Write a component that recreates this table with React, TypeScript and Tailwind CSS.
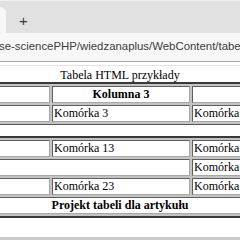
import React from 'react';

const serif = { fontFamily: '"Liberation Serif", "Times New Roman", serif' };

const cell = 'border border-t-[#5f5f5f] border-l-[#5f5f5f] border-r-[#a8a8a8] border-b-[#a8a8a8] bg-white px-[1px] h-[17px] p-0 leading-[15px] whitespace-nowrap overflow-hidden';

const Cols = () => (
  <colgroup>
    <col className="w-[170px]" />
    <col className="w-[138px]" />
    <col className="w-[168px]" />
  </colgroup>
);

export default function App() {
  return (
    <div className="w-[240px] h-[240px] overflow-hidden bg-white relative flex flex-col">
      {/* pasek kart */}
      <div className="h-[33px] bg-[#e1e1e1] border-t border-[#f0f0f0] flex items-end relative">
        <div className="w-[6px] h-[26px] bg-[#f7f7f7] rounded-tr-[6px]" />
        <span className="absolute left-[19px] top-[12px] text-[15px] leading-[16px] text-[#3a3a3a]" style={{ fontFamily: '"Liberation Sans", Arial, sans-serif' }}>+</span>
      </div>
      {/* pasek adresu */}
      <div className="h-[28px] bg-[#f7f7f7] flex items-center overflow-hidden">
        <span className="ml-[-1px] whitespace-nowrap text-[11.4px] text-[#3c3c3c]" style={{ fontFamily: '"Liberation Sans", Arial, sans-serif' }}>
          se-sciencePHP/wiedzanaplus/WebContent/tabela.php
        </span>
      </div>
      <div className="h-px bg-[#a9a9a9]" />
      <div className="h-[3px] bg-white" />
      <div className="h-px bg-[#e4e4e4]" />

      <div className="flex-1 pt-[2px] text-[12px] text-black" style={serif}>
        <table className="table-fixed border-separate border-spacing-[2px] w-[486px] ml-[-123px] border border-[#555] border-t-2 border-t-[#3a3a3a] bg-[#c4c4c4]">
          <caption className="bg-white leading-[14px] text-center">Tabela HTML przykłady</caption>
          <Cols />
          <thead>
            <tr>
              <th className={cell + ' font-bold text-center'}>Kolumna 2</th>
              <th className={cell + ' font-bold text-center'}>Kolumna 3</th>
              <th className={cell + ' font-bold text-center'}>Kolumna 4</th>
            </tr>
          </thead>
          <tbody>
            <tr>
              <td className={cell}>Komórka 2</td>
              <td className={cell}>Komórka 3</td>
              <td className={cell}>Komórka 4</td>
            </tr>
          </tbody>
        </table>

        <table className="mt-[11px] table-fixed border-separate border-spacing-[2px] w-[486px] ml-[-123px] border border-[#555] border-t-2 border-t-[#3a3a3a] border-b-2 border-b-[#3a3a3a] bg-[#c4c4c4]">
          <Cols />
          <tbody>
            <tr>
              <td className={cell}>Komórka 12</td>
              <td className={cell}>Komórka 13</td>
              <td className={cell}>Komórka 14</td>
            </tr>
            <tr>
              <td className={cell} colSpan={2}></td>
              <td className={cell}>Komórka 19</td>
            </tr>
            <tr>
              <td className={cell}>Komórka 22</td>
              <td className={cell}>Komórka 23</td>
              <td className={cell}>Komórka 24</td>
            </tr>
          </tbody>
          <tfoot>
            <tr>
              <td className={cell + ' font-bold text-center'} colSpan={3}>Projekt tabeli dla artykułu</td>
            </tr>
          </tfoot>
        </table>
      </div>
      <div className="h-[3px] bg-[#c9c9c9]" />
    </div>
  );
}
